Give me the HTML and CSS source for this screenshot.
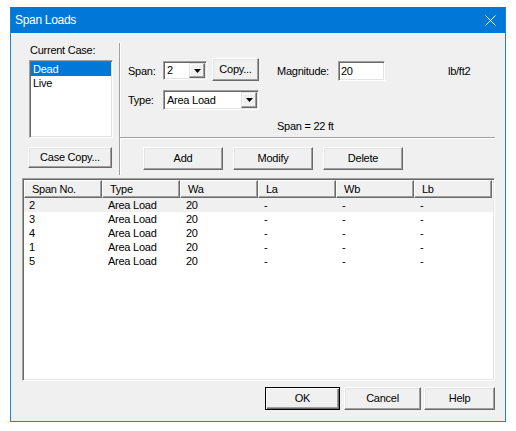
FILE: index.html
```html
<!DOCTYPE html>
<html>
<head>
<meta charset="utf-8">
<link rel="stylesheet" href="styles.css">
</head>
<body>
<div class="page">
  <div class="window">
    <div class="titlebar">
      <span class="title">Span Loads</span>
      <svg class="close" width="11" height="11" viewBox="0 0 11 11"><path d="M0.5 0.5 L10.5 10.5 M10.5 0.5 L0.5 10.5" stroke="#fff" stroke-width="1"/></svg>
    </div>
    <div class="client">
      <div class="top">
        <div class="left">
          <div class="case-label">Current Case:</div>
          <div class="listbox sunken">
            <div class="lb-item selected">Dead</div>
            <div class="lb-item">Live</div>
          </div>
          <div class="btn case-copy">Case Copy...</div>
        </div>
        <div class="vdiv"></div>
        <div class="right">
          <div class="row1">
            <span class="lbl span-lbl">Span:</span>
            <div class="combo sunken span-combo"><span class="val">2</span><span class="arrow"><svg width="7" height="4" viewBox="0 0 7 4"><polygon points="0,0 7,0 3.5,4" fill="#000"/></svg></span></div>
            <div class="btn copy">Copy...</div>
            <span class="lbl mag-lbl">Magnitude:</span>
            <div class="field sunken mag">20</div>
            <span class="lbl unit">lb/ft2</span>
          </div>
          <div class="row2">
            <span class="lbl type-lbl">Type:</span>
            <div class="combo sunken type-combo"><span class="val">Area Load</span><span class="arrow"><svg width="7" height="4" viewBox="0 0 7 4"><polygon points="0,0 7,0 3.5,4" fill="#000"/></svg></span></div>
          </div>
          <div class="spanlen">Span = 22 ft</div>
          <div class="hr"></div>
          <div class="btnrow">
            <div class="btn action">Add</div>
            <div class="btn action">Modify</div>
            <div class="btn action">Delete</div>
          </div>
        </div>
      </div>
      <div class="listview sunken">
        <div class="lv-header">
          <div class="hcell">Span No.</div>
          <div class="hcell">Type</div>
          <div class="hcell">Wa</div>
          <div class="hcell">La</div>
          <div class="hcell">Wb</div>
          <div class="hcell">Lb</div>
        </div>
        <div class="lv-row sel"><span>2</span><span>Area Load</span><span>20</span><span>-</span><span>-</span><span>-</span></div>
        <div class="lv-row"><span>3</span><span>Area Load</span><span>20</span><span>-</span><span>-</span><span>-</span></div>
        <div class="lv-row"><span>4</span><span>Area Load</span><span>20</span><span>-</span><span>-</span><span>-</span></div>
        <div class="lv-row"><span>1</span><span>Area Load</span><span>20</span><span>-</span><span>-</span><span>-</span></div>
        <div class="lv-row"><span>5</span><span>Area Load</span><span>20</span><span>-</span><span>-</span><span>-</span></div>
      </div>
      <div class="footer">
        <div class="btn default ok">OK</div>
        <div class="btn cancel">Cancel</div>
        <div class="btn help">Help</div>
      </div>
    </div>
  </div>
</div>
</body>
</html>
```
FILE: styles.css
```css
* { box-sizing: border-box; }
body {
  margin: 0;
  background: #fff;
  font-family: "Liberation Sans", Arial, sans-serif;
  font-size: 11px;
  letter-spacing: -0.25px;
  color: #000;
}
.page { padding: 7px 0 0 10px; }
.window {
  width: 496px;
  height: 415px;
  border: 1px solid #1a84d8;
  border-top: 0;
  display: flex;
  flex-direction: column;
}
.titlebar {
  height: 26px;
  flex: none;
  background: #0078d7;
  color: #fff;
  display: flex;
  align-items: center;
  justify-content: space-between;
  padding: 0 9px 0 4px;
}
.title { font-size: 12px; letter-spacing: -0.3px; }
.close { display: block; }
.client {
  flex: 1;
  background: #f0f0f0;
  display: flex;
  flex-direction: column;
}
.sunken {
  border: 1px solid;
  border-color: #a0a0a0 #fff #fff #a0a0a0;
  box-shadow: inset 1px 1px 0 #696969, inset -1px -1px 0 #e3e3e3;
  background: #fff;
}
.btn {
  background: #f0f0f0;
  border: 1px solid;
  border-color: #fff #696969 #696969 #fff;
  box-shadow: inset -1px -1px 0 #a0a0a0, inset 1px 1px 0 #e3e3e3;
  display: flex;
  align-items: center;
  justify-content: center;
  line-height: 13px;
}
.btn.default {
  border: 1px solid #000;
  box-shadow: inset 1px 1px 0 #fff, inset -1px -1px 0 #696969, inset -2px -2px 0 #a0a0a0;
}
.top { display: flex; height: 145px; flex: none; }
.left { width: 108px; padding: 11px 0 0 17px; }
.case-label { line-height: 13px; margin-left: 2px; }
.listbox {
  margin-top: 3px;
  margin-left: 1px;
  width: 84px;
  height: 78px;
  padding: 1px;
}
.lb-item { height: 14px; line-height: 14px; padding-left: 2px; }
.lb-item.selected { background: #0078d7; color: #fff; }
.case-copy { margin-top: 9px; width: 84px; height: 21px; }
.vdiv {
  margin-top: 10px;
  height: 132px;
  width: 2px;
  border-left: 1px solid #a0a0a0;
  border-right: 1px solid #fff;
}
.right { flex: 1; padding-right: 10px; }
.lbl { line-height: 13px; margin-top: 7px; }
.row1 {
  margin-top: 25px;
  height: 24px;
  display: flex;
  align-items: flex-start;
  padding-left: 7px;
}
.span-lbl, .type-lbl { width: 35px; }
.combo { display: flex; padding: 1px; }
.combo .val { flex: 1; padding-left: 2px; line-height: 15px; }
.combo .arrow {
  width: 16px;
  background: #f0f0f0;
  border: 1px solid;
  border-color: #e3e3e3 #696969 #696969 #e3e3e3;
  box-shadow: inset -1px -1px 0 #a0a0a0, inset 1px 1px 0 #fff;
  display: flex;
  align-items: center;
  justify-content: center;
}
.combo .arrow svg { display: block; }
.span-combo { width: 44px; height: 19px; margin-top: 3px; margin-right: 5px; }
.copy { width: 47px; height: 23px; margin-right: 18px; }
.mag-lbl { width: 61px; }
.mag { width: 47px; height: 20px; margin-top: 3px; margin-right: 63px; padding: 1px 2px; line-height: 16px; }
.row2 {
  margin-top: 8px;
  display: flex;
  align-items: flex-start;
  padding-left: 7px;
  height: 20px;
}
.type-lbl { margin-top: 4px; }
.type-combo { width: 96px; height: 20px; }
.type-combo .val { line-height: 16px; }
.spanlen { margin-top: 10px; padding-left: 156px; line-height: 13px; }
.hr {
  margin-top: 4px;
  margin-left: -1px;
  height: 2px;
  border-top: 1px solid #a0a0a0;
  border-bottom: 1px solid #fff;
}
.btnrow { margin-top: 8px; display: flex; gap: 10px; padding-left: 22px; }
.action { width: 80px; height: 23px; }
.listview {
  margin: 0 10px 0 11px;
  height: 203px;
  padding: 1px;
  flex: none;
}
.lv-header { display: grid; grid-template-columns: repeat(6, 78px); }
.hcell {
  height: 18px;
  background: #f0f0f0;
  border: 1px solid;
  border-color: #fff #696969 #696969 #fff;
  box-shadow: inset -1px -1px 0 #a0a0a0;
  padding-left: 7px;
  line-height: 16px;
}
.lv-row {
  display: grid;
  grid-template-columns: repeat(6, 78px);
  height: 14px;
  line-height: 14px;
}
.lv-row span { padding-left: 6px; }
.lv-row span:first-child { padding-left: 5px; }
.lv-row.sel { background: #f0f0f0; }
.footer { display: flex; margin-top: 6px; padding-left: 254px; }
.ok { width: 75px; height: 23px; }
.cancel { width: 77px; height: 23px; margin-left: 4px; }
.help { width: 71px; height: 23px; margin-left: 3px; }
```
